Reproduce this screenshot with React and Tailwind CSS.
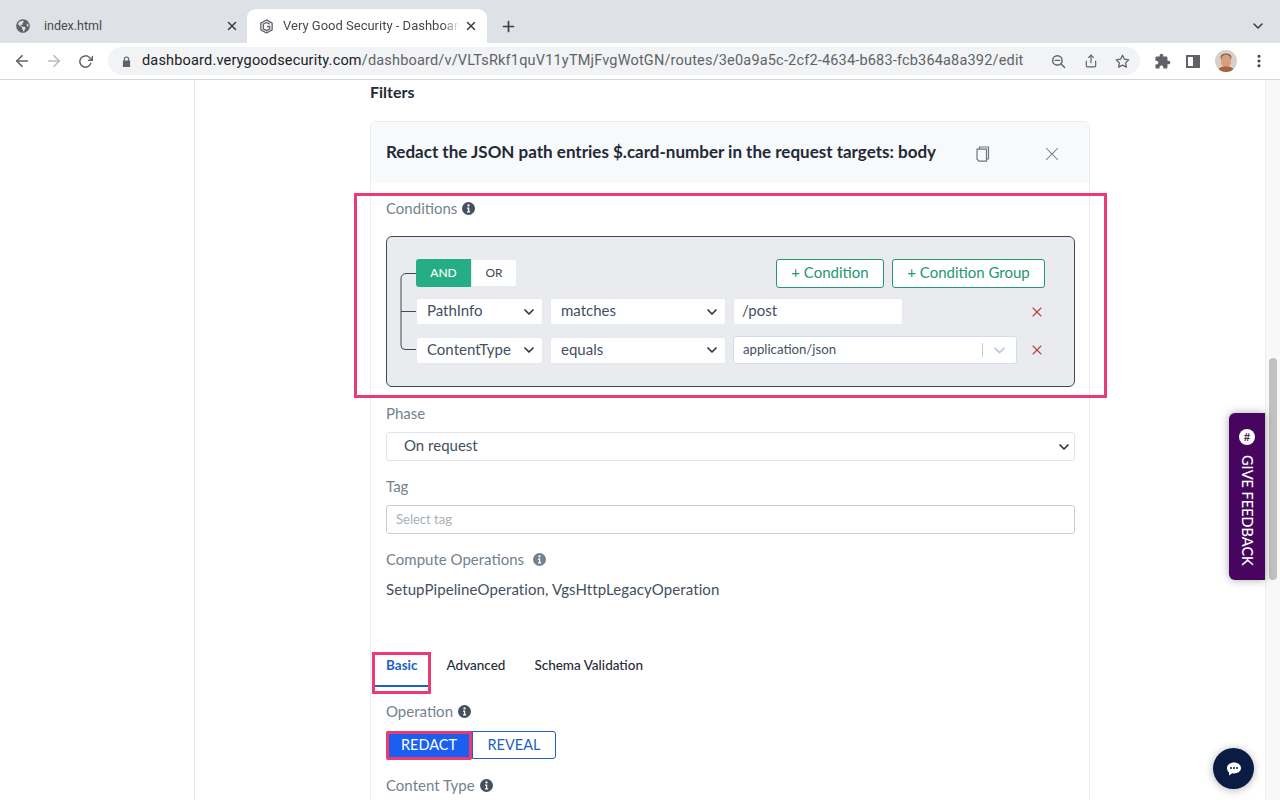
import React from "react";
import { FaGlobeAmericas } from "react-icons/fa";
import { FiChevronDown, FiX, FiPlus, FiArrowLeft, FiArrowRight, FiRotateCw, FiShare, FiStar, FiMoreVertical } from "react-icons/fi";

function InfoIcon({ className }) {
  return (
    <svg viewBox="0 0 14 14" className={className}>
      <circle cx="7" cy="7" r="7" fill="currentColor" />
      <circle cx="7" cy="3.7" r="1.2" fill="#fff" />
      <path d="M5.4 6h2.4v4h1v1.2H5.4V10h1V7.2h-1z" fill="#fff" />
    </svg>
  );
}

function Chevron({ className }) {
  return (
    <svg viewBox="0 0 10 6" className={className} fill="none" stroke="currentColor" strokeWidth="1.7" strokeLinecap="round" strokeLinejoin="round">
      <path d="M1 1l4 4 4-4" />
    </svg>
  );
}

function SelectBox({ label, width }) {
  return (
    <div className={`${width} h-[27px] bg-white rounded-[3px] border border-[#e6eaf0] flex items-center justify-between pl-[10px] pr-[8px] text-[15px] text-[#44505e]`}>
      <span className="pb-[2px]">{label}</span>
      <Chevron className="w-[10px] h-[6px] text-[#2e3742]" />
    </div>
  );
}

function RemoveX() {
  return (
    <div className="ml-auto w-4 flex justify-center">
      <FiX className="text-[#b5423f] w-[16px] h-[16px]" strokeWidth={1.6} />
    </div>
  );
}

function Label({ children, info, infoClass }) {
  return (
    <div className="h-5 flex items-center gap-[5px] text-[15px] text-[#74828f]">
      <span>{children}</span>
      {info && <InfoIcon className={infoClass || "w-[13px] h-[13px] text-[#44505e]"} />}
    </div>
  );
}

function BrowserChrome() {
  return (
    <div className="shrink-0 font-['Roboto',sans-serif]">
      <div className="h-[43px] bg-[#dee1e6] flex items-end">
        <div className="w-[245px] h-[34px] flex items-center pl-[16px] pr-[5px] text-[#45494e] text-[12.5px]">
          <FaGlobeAmericas className="w-[14px] h-[14px] mr-[14px] text-[#5f6368]" />
          <span className="flex-1">index.html</span>
          <FiX className="w-[14px] h-[14px] text-[#3c4043] mr-[1px]" strokeWidth={2.5} />
        </div>
        <div className="w-[240px] h-[34px] bg-white rounded-t-[9px] ml-[2px] flex items-center pl-[12px] pr-[9px] text-[#45494e] text-[13px]">
          <svg viewBox="0 0 16 16" className="w-[15px] h-[15px] mr-[9px] shrink-0" fill="none" stroke="#5f6368" strokeWidth="1.4">
            <path d="M8 1l6 3.500v7L8 15l-6-3.500v-7z" />
            <path d="M11.500 5.500L8 3.600 4.600 5.500v5L8 12.400l3.400-1.900V8H8.500" />
          </svg>
          <span className="flex-1 overflow-hidden whitespace-nowrap [mask-image:linear-gradient(to_right,#000_90%,transparent)]">Very Good Security - Dashboard</span>
          <FiX className="w-[14px] h-[14px] text-[#3c4043] ml-[4px] shrink-0" strokeWidth={2.5} />
        </div>
        <div className="h-[34px] flex items-center ml-[13px]">
          <FiPlus className="w-[17px] h-[17px] text-[#3c4043]" strokeWidth={2.4} />
        </div>
        <div className="ml-auto h-[34px] flex items-center pr-[14px]">
          <FiChevronDown className="w-[16px] h-[16px] text-[#3c4043]" strokeWidth={2.4} />
        </div>
      </div>
      <div className="h-[37px] bg-white border-b border-[#d6d8db] flex items-center">
        <FiArrowLeft className="w-[18px] h-[18px] text-[#5f6368] ml-[13px]" strokeWidth={2.2} />
        <FiArrowRight className="w-[18px] h-[18px] text-[#b9bcc0] ml-[14px]" strokeWidth={2.2} />
        <FiRotateCw className="w-[15px] h-[15px] text-[#5f6368] ml-[15px]" strokeWidth={2.4} />
        <div className="ml-[15px] w-[1032px] h-[28px] bg-[#f1f3f4] rounded-full flex items-center pl-[14px]">
          <svg viewBox="0 0 10 12" className="w-[9px] h-[11px] mr-[11px]" fill="#5f6368">
            <path d="M2 5V3.400a3 3 0 016 0V5h1v7H1V5zm1.200 0h3.600V3.400a1.800 1.800 0 00-3.600 0z" />
          </svg>
          <span className="text-[14.5px] whitespace-nowrap tracking-[0.18px] text-[#202124]">dashboard.verygoodsecurity.com<span className="text-[#5f6368]">/dashboard/v/VLTsRkf1quV11yTMjFvgWotGN/routes/3e0a9a5c-2cf2-4634-b683-fcb364a8a392/edit</span></span>
          <svg viewBox="0 0 16 16" className="w-[15px] h-[15px] ml-[27px] shrink-0" fill="none" stroke="#5f6368" strokeWidth="1.500" strokeLinecap="round">
            <circle cx="6.800" cy="6.800" r="5" />
            <path d="M10.500 10.500L14.500 14.500M4.500 6.800h4.600" />
          </svg>
          <FiShare className="w-[14px] h-[14px] text-[#5f6368] ml-[18px] shrink-0" strokeWidth={2} />
          <FiStar className="w-[15px] h-[15px] text-[#5f6368] ml-[17px] shrink-0" strokeWidth={2} />
        </div>
        <svg viewBox="0 0 24 24" className="w-[17px] h-[17px] ml-[14px] shrink-0" fill="#5f6368">
          <path d="M20.500 11H19V7c0-1.100-.9-2-2-2h-4V3.500C13 2.120 11.880 1 10.500 1S8 2.120 8 3.500V5H4c-1.100 0-1.990.9-1.990 2v3.800H3.500c1.490 0 2.700 1.210 2.700 2.700s-1.210 2.700-2.700 2.700H2V20c0 1.100.9 2 2 2h3.800v-1.500c0-1.490 1.210-2.700 2.700-2.700s2.700 1.210 2.700 2.700V22H17c1.100 0 2-.9 2-2v-4h1.500c1.380 0 2.500-1.120 2.500-2.500S21.880 11 20.500 11z" />
        </svg>
        <div className="w-[14px] h-[13px] border-2 border-[#5f6368] ml-[15px] flex justify-end">
          <div className="w-[5px] h-full bg-[#5f6368]" />
        </div>
        <svg viewBox="0 0 20 20" className="w-[22px] h-[22px] ml-[15px] rounded-full shrink-0">
          <rect width="20" height="20" fill="#d8cfc6" />
          <path d="M5 7c0-5 10-5 10 0l-1 2H6z" fill="#7a6450" />
          <ellipse cx="10" cy="10" rx="4.600" ry="6" fill="#d99f7c" />
          <path d="M2 20c1-4 4-5 8-5s7 1 8 5z" fill="#a5643f" />
        </svg>
        <FiMoreVertical className="w-[16px] h-[16px] text-[#3c4043] ml-[14px]" strokeWidth={2.6} />
      </div>
    </div>
  );
}

function Conditions() {
  return (
    <div className="relative mt-[18px] h-[151px] bg-[#e9ebef] border border-[#3f4a56] rounded-[6px] pt-[22px] pl-[29px] pr-[29px]">
      <svg className="absolute left-[12px] top-[36px] w-[18px] h-[80px]" viewBox="0 0 18 80" fill="none" stroke="#3f4a56" strokeWidth="1">
        <path d="M17 .5H7a5 5 0 00-5 5V72.500a4 4 0 004 4h11M2 38.500h15" />
      </svg>
      <div className="flex items-center h-[28px]">
        <div className="w-[55px] h-[28px] bg-[#25ae85] rounded-l-[3px] flex items-center justify-center text-white text-[12px] font-medium">AND</div>
        <div className="w-[46px] h-[28px] bg-white rounded-r-[3px] border border-[#e6eaf0] flex items-center justify-center text-[#3c4856] text-[12px]">OR</div>
        <div className="ml-auto w-[108px] h-[29px] bg-white border border-[#25966f] rounded-[3px] flex items-center justify-center pb-[2px] text-[15px] text-[#25966f]">+ Condition</div>
        <div className="ml-[8px] w-[153px] h-[29px] bg-white border border-[#25966f] rounded-[3px] flex items-center justify-center pb-[2px] text-[15px] text-[#25966f]">+ Condition Group</div>
      </div>
      <div className="flex items-center mt-[11px] gap-[7px]">
        <SelectBox label="PathInfo" width="w-[127px]" />
        <SelectBox label="matches" width="w-[176px]" />
        <div className="w-[170px] h-[27px] bg-white rounded-[3px] border border-[#e6eaf0] flex items-center pl-[8px] pb-[2px] text-[15px] text-[#44505e]">/post</div>
        <RemoveX />
      </div>
      <div className="flex items-center mt-[11px] gap-[7px]">
        <SelectBox label="ContentType" width="w-[127px]" />
        <SelectBox label="equals" width="w-[176px]" />
        <div className="w-[284px] h-[28px] bg-white rounded-[3px] border border-[#cfdcf2] flex items-center pl-[9px] text-[13.2px] text-[#44505e]">
          <span className="flex-1">application/json</span>
          <div className="w-px h-[14px] bg-[#c5cbd3]" />
          <Chevron className="w-[11px] h-[7px] text-[#c5cbd3] mx-[11px]" />
        </div>
        <RemoveX />
      </div>
    </div>
  );
}

function Main() {
  return (
    <div className="flex-1 border-l border-[#e6e8eb] pl-[175px] overflow-hidden">
      <div className="w-[720px] font-['Lato',sans-serif]">
        <div className="h-6 flex items-center text-[16px] font-bold text-[#1f2a37]">Filters</div>
        <div className="mt-[17px] border border-[#e9ecf0] rounded-t-[6px]">
          <div className="h-[61px] bg-[#f8f9fb] rounded-t-[6px] flex items-start pl-[15px]">
            <h2 className="mt-[17px] text-[17px] font-bold text-[#1f2a37] whitespace-nowrap">Redact the JSON path entries $.card-number in the request targets: body</h2>
            <svg viewBox="0 0 14 16" className="ml-[40px] mt-[24px] w-[14px] h-[16px] shrink-0" fill="none" stroke="#6b7784" strokeWidth="1.200">
              <path d="M3.500 3V1h9v12h-2M1 3.200h9.500v12H3l-2-2z" />
            </svg>
            <FiX className="ml-[51px] mt-[21px] w-[22px] h-[22px] text-[#6b7784] shrink-0" strokeWidth={1.1} />
          </div>
          <div className="pl-[15px] pr-[14px] pt-[15px] h-[640px]">
            <Label info>Conditions</Label>
            <Conditions />
            <div className="mt-[16px]"><Label>Phase</Label></div>
            <div className="mt-[9px] h-[29px] border border-[#e2e5e9] rounded-[3px] flex items-center justify-between pl-[17px] pr-[5px] text-[15px] text-[#44505e]">
              <span className="pb-[2px]">On request</span>
              <Chevron className="w-[10px] h-[6px] text-[#2e3742]" />
            </div>
            <div className="mt-[15px]"><Label>Tag</Label></div>
            <div className="mt-[9px] h-[29px] border border-[#c9ced4] rounded-[3px] flex items-center pl-[9px] text-[13px] text-[#a9b0b8]">Select tag</div>
            <div className="mt-[15px]"><Label info infoClass="w-[13px] h-[13px] text-[#74828f] ml-[4px]">Compute Operations</Label></div>
            <div className="mt-[10px] h-5 flex items-center text-[15px] tracking-[0.1px] text-[#44505e]">SetupPipelineOperation, VgsHttpLegacyOperation</div>
            <div className="mt-[56px] -ml-[13px] flex text-[13.5px] h-[32px]">
              <div className="px-[13px] h-[32px] border-b-2 border-[#1d5fc4] font-bold text-[#1d5fc4]">Basic</div>
              <div className="px-[16px] text-[#1f2a37] font-medium">Advanced</div>
              <div className="px-[13px] text-[#1f2a37] font-medium">Schema Validation</div>
            </div>
            <div className="mt-[14px]"><Label info>Operation</Label></div>
            <div className="mt-[10px] flex h-[28px] text-[14.5px]">
              <div className="w-[86px] bg-[#1a5ff0] rounded-l-[3px] text-white flex items-center justify-center">REDACT</div>
              <div className="w-[84px] border border-[#1d5fc4] rounded-r-[3px] text-[#1d5fc4] flex items-center justify-center">REVEAL</div>
            </div>
            <div className="mt-[16px]"><Label info>Content Type</Label></div>
          </div>
        </div>
      </div>
    </div>
  );
}

export default function App() {
  return (
    <div className="relative w-[1280px] h-[800px] overflow-hidden bg-white flex flex-col">
      <BrowserChrome />
      <div className="flex-1 flex min-h-0">
        <div className="w-[194px] shrink-0" />
        <Main />
        <div className="w-[15px] shrink-0 bg-[#f8f8f8] border-l border-[#eeeeee] pt-[278px] pl-[3px]">
          <div className="w-[8px] h-[222px] bg-[#c1c1c1] rounded-full" />
        </div>
      </div>

      {/* annotations */}
      <div className="absolute left-[354px] top-[193px] w-[753px] h-[205px] border-[3px] border-[#ec3a72]" />
      <div className="absolute left-[372px] top-[652px] w-[59px] h-[42px] border-[3px] border-[#ec3a72]" />
      <div className="absolute left-[386px] top-[731px] w-[86px] h-[29px] border-[3px] border-[#ec3a72] rounded-[2px]" />

      {/* feedback tab */}
      <div className="absolute left-[1229px] top-[413px] w-[36px] h-[167px] bg-[#48055f] rounded-l-[6px] shadow-[0_0_8px_rgba(0,0,0,0.35)] flex flex-col items-center pt-[16px] font-['Lato',sans-serif]">
        <div className="w-[16px] h-[16px] bg-white rounded-full flex items-center justify-center text-[#48055f] text-[12px] leading-none">#</div>
        <div className="mt-[10px] text-white text-[14.5px] font-medium whitespace-nowrap [writing-mode:vertical-rl]">GIVE FEEDBACK</div>
      </div>

      {/* chat bubble */}
      <div className="absolute left-[1213px] top-[748px] w-[41px] h-[41px] rounded-full bg-[#0b1b44] shadow-[0_1px_8px_rgba(0,0,0,0.3)] flex items-center justify-center">
        <svg viewBox="0 0 16 16" className="w-[16px] h-[16px]">
          <path d="M8 1.500c4 0 7 2.400 7 5.600s-3 5.400-7 5.400c-.6 0-1.200 0-1.700-.2L3 14.500v-3C1.700 10.500 1 9 1 7.100 1 3.900 4 1.500 8 1.500z" fill="#fff" />
          <circle cx="5" cy="7" r="1" fill="#0b1b44" />
          <circle cx="8" cy="7" r="1" fill="#0b1b44" />
          <circle cx="11" cy="7" r="1" fill="#0b1b44" />
        </svg>
      </div>
    </div>
  );
}
